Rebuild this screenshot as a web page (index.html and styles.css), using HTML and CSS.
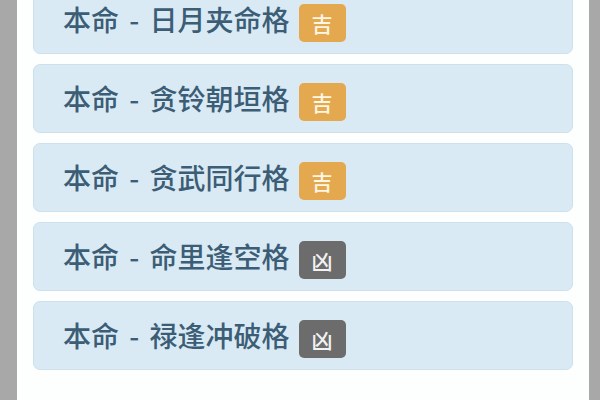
FILE: index.html
```html
<!DOCTYPE html>
<html lang="zh-CN">
<head>
<meta charset="utf-8">
<link rel="stylesheet" href="styles.css">
</head>
<body>
<div class="frame">
  <div class="panel">
    <ul class="list">
      <li class="card"><span class="name">本命 - 日月夹命格</span><span class="tag good">吉</span></li>
      <li class="card"><span class="name">本命 - 贪铃朝垣格</span><span class="tag good">吉</span></li>
      <li class="card"><span class="name">本命 - 贪武同行格</span><span class="tag good">吉</span></li>
      <li class="card"><span class="name">本命 - 命里逢空格</span><span class="tag bad">凶</span></li>
      <li class="card"><span class="name">本命 - 禄逢冲破格</span><span class="tag bad">凶</span></li>
    </ul>
  </div>
</div>
</body>
</html>
```

FILE: styles.css
```css
html, body {
  margin: 0;
  padding: 0;
  width: 600px;
  height: 400px;
  overflow: hidden;
  font-family: "Noto Sans CJK SC", "Noto Sans", sans-serif;
}
.frame {
  display: flex;
  width: 600px;
  height: 400px;
  background: #a8a8a8;
  padding: 0 11px 0 17px;
  box-sizing: border-box;
}
.panel {
  flex: 1;
  background: #fdfefe;
  padding: 0 16px;
  overflow: hidden;
}
.list {
  list-style: none;
  margin: -15px 0 0;
  padding: 0;
  display: flex;
  flex-direction: column;
  gap: 10px;
}
.card {
  height: 69px;
  box-sizing: border-box;
  background: #d9eaf4;
  border: 1px solid #cde0ec;
  border-radius: 7px;
  display: flex;
  align-items: center;
  padding: 0 0 2px 29px;
  gap: 9px;
}
.name {
  font-size: 28px;
  word-spacing: 4px;
  color: #3c5d76;
  line-height: 1;
  font-weight: 500;
}
.tag {
  width: 47px;
  height: 38px;
  border-radius: 5px;
  display: flex;
  align-items: center;
  justify-content: center;
  font-size: 21px;
  font-weight: 500;
  line-height: 1;
  color: #fff6e4;
  margin-top: 9px;
}
.good { background: #e4a84f; }
.bad { background: #6c6c6c; color: #f2f2f2; }
```
